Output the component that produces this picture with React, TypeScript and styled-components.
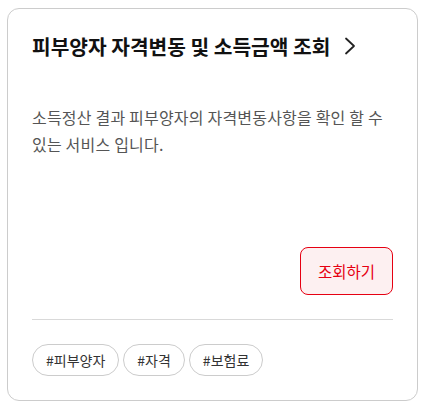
import React from 'react'
import styled, { createGlobalStyle } from 'styled-components'

const GlobalStyle = createGlobalStyle`
    html, body {
        margin: 0;
        padding: 0;
        background: #ffffff;
    }
    body {
        font-family: 'Noto Sans CJK KR', 'Noto Sans', sans-serif;
    }
`

const tags = ['피부양자', '자격', '보험료']

export default function App() {
    return (
        <>
            <GlobalStyle />
            <Page>
                <Card>
                    <TitleRow>
                        <Title>피부양자 자격변동 및 소득금액 조회</Title>
                        <Chevron viewBox="0 0 12 18" aria-hidden>
                            <path d="M2 1.5 L10 9 L2 16.5" />
                        </Chevron>
                    </TitleRow>
                    <Description>소득정산 결과 피부양자의 자격변동사항을 확인 할 수 있는 서비스 입니다.</Description>
                    <Actions>
                        <LookupButton type="button">조회하기</LookupButton>
                    </Actions>
                    <Divider />
                    <TagList>
                        {tags.map((tag) => (
                            <Tag key={tag}>#{tag}</Tag>
                        ))}
                    </TagList>
                </Card>
            </Page>
        </>
    )
}

const Page = styled.div`
    padding: 8px 8px 8px 7px;
`

const Card = styled.div`
    box-sizing: border-box;
    width: 411px;
    height: 393px;
    display: flex;
    flex-direction: column;
    padding: 23px 24px 24px 24px;
    border: 1px solid #cccccc;
    border-radius: 12px;
    background: #ffffff;
`

const TitleRow = styled.div`
    display: flex;
    align-items: center;
    gap: 14px;
`

const Title = styled.h2`
    margin: 0;
    font-size: 20.3px;
    line-height: 28px;
    font-weight: 700;
    color: #111111;
`

const Chevron = styled.svg`
    width: 12px;
    height: 18px;
    fill: none;
    stroke: #222222;
    stroke-width: 1.8;
    stroke-linecap: round;
    stroke-linejoin: round;
`

const Description = styled.p`
    margin: 44px 0 0 0;
    font-size: 16px;
    line-height: 27px;
    letter-spacing: 0.2px;
    color: #555555;
    flex: 1;
`

const Actions = styled.div`
    display: flex;
    justify-content: flex-end;
`

const LookupButton = styled.button`
    box-sizing: border-box;
    height: 48px;
    padding: 0 17px;
    border: 1px solid #e60012;
    border-radius: 8px;
    background: #fdf0f1;
    color: #e60012;
    font-family: 'Noto Sans CJK KR', 'Noto Sans', sans-serif;
    font-size: 15.5px;
    cursor: pointer;
`

const Divider = styled.hr`
    margin: 24px 0 24px 0;
    border: none;
    border-top: 1px solid #d9d9d9;
`

const TagList = styled.div`
    display: flex;
    gap: 4px;
`

const Tag = styled.span`
    box-sizing: border-box;
    height: 32px;
    display: inline-flex;
    align-items: center;
    padding: 0 13px;
    border: 1px solid #cccccc;
    border-radius: 16px;
    font-size: 14px;
    color: #333333;
`
